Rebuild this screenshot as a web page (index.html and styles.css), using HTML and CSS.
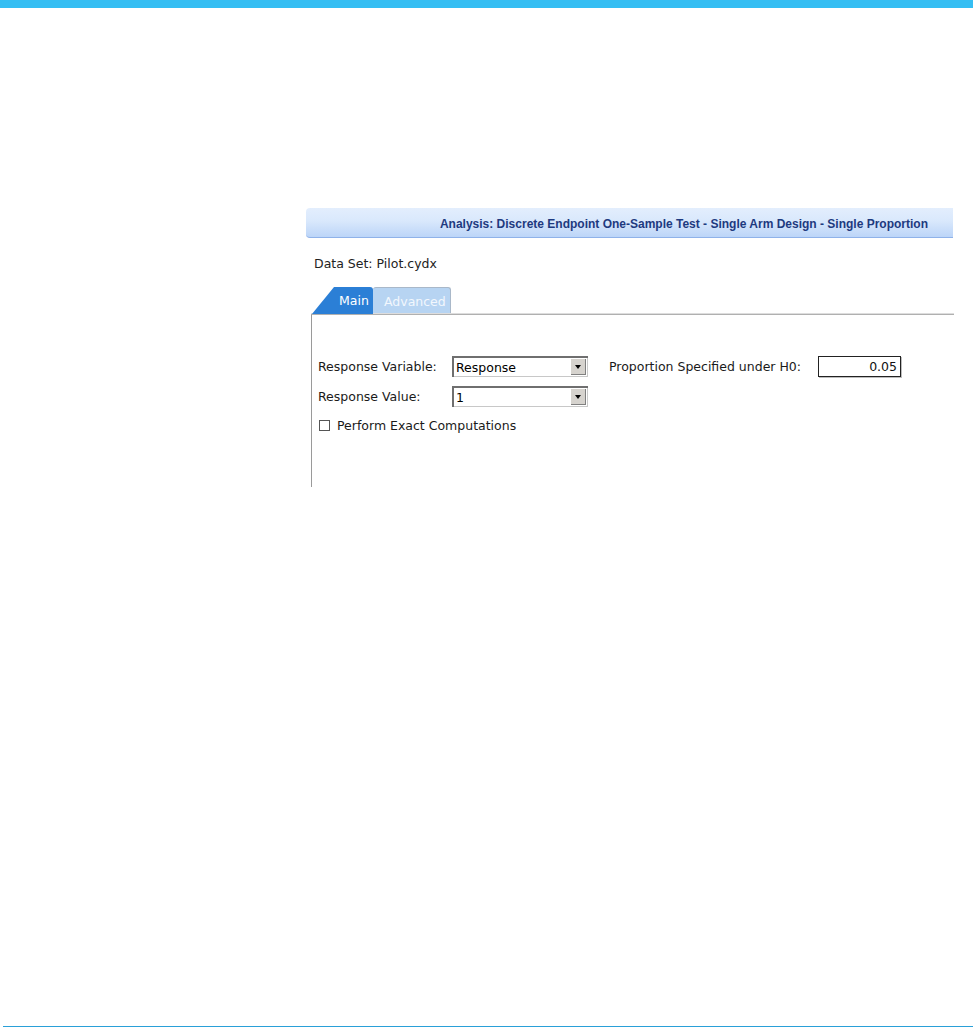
FILE: index.html
```html
<!DOCTYPE html>
<html>
<head>
<meta charset="utf-8">
<link rel="stylesheet" href="styles.css">
</head>
<body>
<div class="page">
  <div class="topbar"></div>
  <div class="content">
    <div class="header">Analysis: Discrete Endpoint One-Sample Test - Single Arm Design - Single Proportion</div>
    <div class="dataset">Data Set: Pilot.cydx</div>
    <div class="tabs">
      <div class="tab tab-main">Main</div>
      <div class="tab tab-adv">Advanced</div>
    </div>
    <div class="panel">
      <div class="rows">
        <div class="row">
          <span class="label lbl1">Response Variable:</span>
          <div class="select"><span class="sel-text">Response</span><span class="sel-btn"><span class="tri"></span></span></div>
          <span class="label lbl2">Proportion Specified under H0:</span>
          <div class="input">0.05</div>
        </div>
        <div class="row">
          <span class="label lbl1">Response Value:</span>
          <div class="select"><span class="sel-text">1</span><span class="sel-btn"><span class="tri"></span></span></div>
        </div>
        <div class="row check-row">
          <span class="checkbox"></span>
          <span class="label">Perform Exact Computations</span>
        </div>
      </div>
    </div>
  </div>
  <div class="bottomline"></div>
</div>
</body>
</html>
```

FILE: styles.css
```css
html, body {
  margin: 0;
  padding: 0;
  background: #ffffff;
}
.page {
  display: flex;
  flex-direction: column;
  height: 1028px;
  font-family: "DejaVu Sans", Verdana, sans-serif;
  color: #222;
}
.topbar {
  height: 8px;
  background: #35bef3;
}
.content {
  padding-left: 306px;
  padding-top: 200px;
  display: flex;
  flex-direction: column;
}
.header {
  width: 622px;
  height: 29px;
  line-height: 32px;
  padding-right: 25px;
  text-align: right;
  border-radius: 4px 0 0 4px;
  background: linear-gradient(to bottom, #e3eefd 0%, #d9e8fc 45%, #bcd5f8 100%);
  border-bottom: 1px solid #8fb2e9;
  font-family: "Liberation Sans", Arial, sans-serif;
  font-weight: bold;
  font-size: 12px;
  letter-spacing: 0;
  color: #1e3a80;
}
.dataset {
  margin-top: 18px;
  margin-left: 8px;
  font-size: 12.5px;
  line-height: 15px;
  color: #222;
}
.tabs {
  margin-top: 16px;
  margin-left: 6px;
  display: flex;
  height: 27px;
  align-items: flex-end;
}
.tab {
  height: 27px;
  box-sizing: border-box;
  font-size: 12.5px;
  line-height: 27px;
  color: #ffffff;
}
.tab-main {
  width: 61px;
  background: #2b7fd6;
  clip-path: polygon(0 100%, 22px 0, 100% 0, 100% 100%);
  border-radius: 0 3px 0 0;
  padding-left: 27px;
}
.tab-adv {
  width: 78px;
  background: #b7d4f2;
  border: 1px solid #a9b8c9;
  border-bottom: none;
  border-left: none;
  border-radius: 3px 3px 0 0;
  padding-left: 11px;
  color: #f2f7fd;
}
.panel {
  margin-left: 5px;
  width: 642px;
  height: 172px;
  border-top: 1px solid #b0b0b0;
  border-left: 1px solid #9a9a9a;
  box-shadow: 0 -1px 0 #dddddd;
}
.rows {
  padding-top: 41px;
  padding-left: 6px;
  display: flex;
  flex-direction: column;
  gap: 9px;
}
.row {
  display: flex;
  align-items: center;
  height: 21px;
}
.label {
  font-size: 12.5px;
  color: #1a1a1a;
  white-space: nowrap;
}
.lbl1 {
  width: 134px;
}
.lbl2 {
  margin-left: 21px;
  width: 209px;
}
.select {
  width: 136px;
  height: 21px;
  box-sizing: border-box;
  display: flex;
  align-items: stretch;
  background: #fff;
  box-shadow: inset 2px 2px 0 #6f6f6f, inset -1px -1px 0 #c8c8c8;
  font-family: "DejaVu Sans", Tahoma, sans-serif;
}
.sel-text {
  flex: 1;
  padding-left: 4px;
  padding-top: 3px;
  font-size: 12.5px;
  color: #000;
  line-height: 17px;
}
.sel-btn {
  width: 16px;
  margin: 2px 2px 2px 0;
  background: #d6d3ce;
  box-shadow: inset 1px 1px 0 #ffffff, inset -1px -1px 0 #808080;
  display: flex;
  align-items: center;
  justify-content: center;
}
.tri {
  width: 0;
  height: 0;
  border-left: 3.5px solid transparent;
  border-right: 3.5px solid transparent;
  border-top: 4px solid #000;
}
.input {
  width: 83px;
  height: 21px;
  box-sizing: border-box;
  border: 1px solid #222;
  box-shadow: 1px 1px 0 #bdbdbd;
  text-align: right;
  padding-right: 3px;
  font-size: 12.5px;
  line-height: 19px;
  color: #111;
}
.check-row {
  height: 18px;
  gap: 7px;
  padding-left: 1px;
}
.checkbox {
  width: 11px;
  height: 11px;
  box-sizing: border-box;
  border: 1px solid #555;
  background: #fff;
}
.bottomline {
  margin-top: auto;
  margin-left: 3px;
  margin-bottom: 1px;
  height: 1px;
  background: #2aa0d8;
}
```
